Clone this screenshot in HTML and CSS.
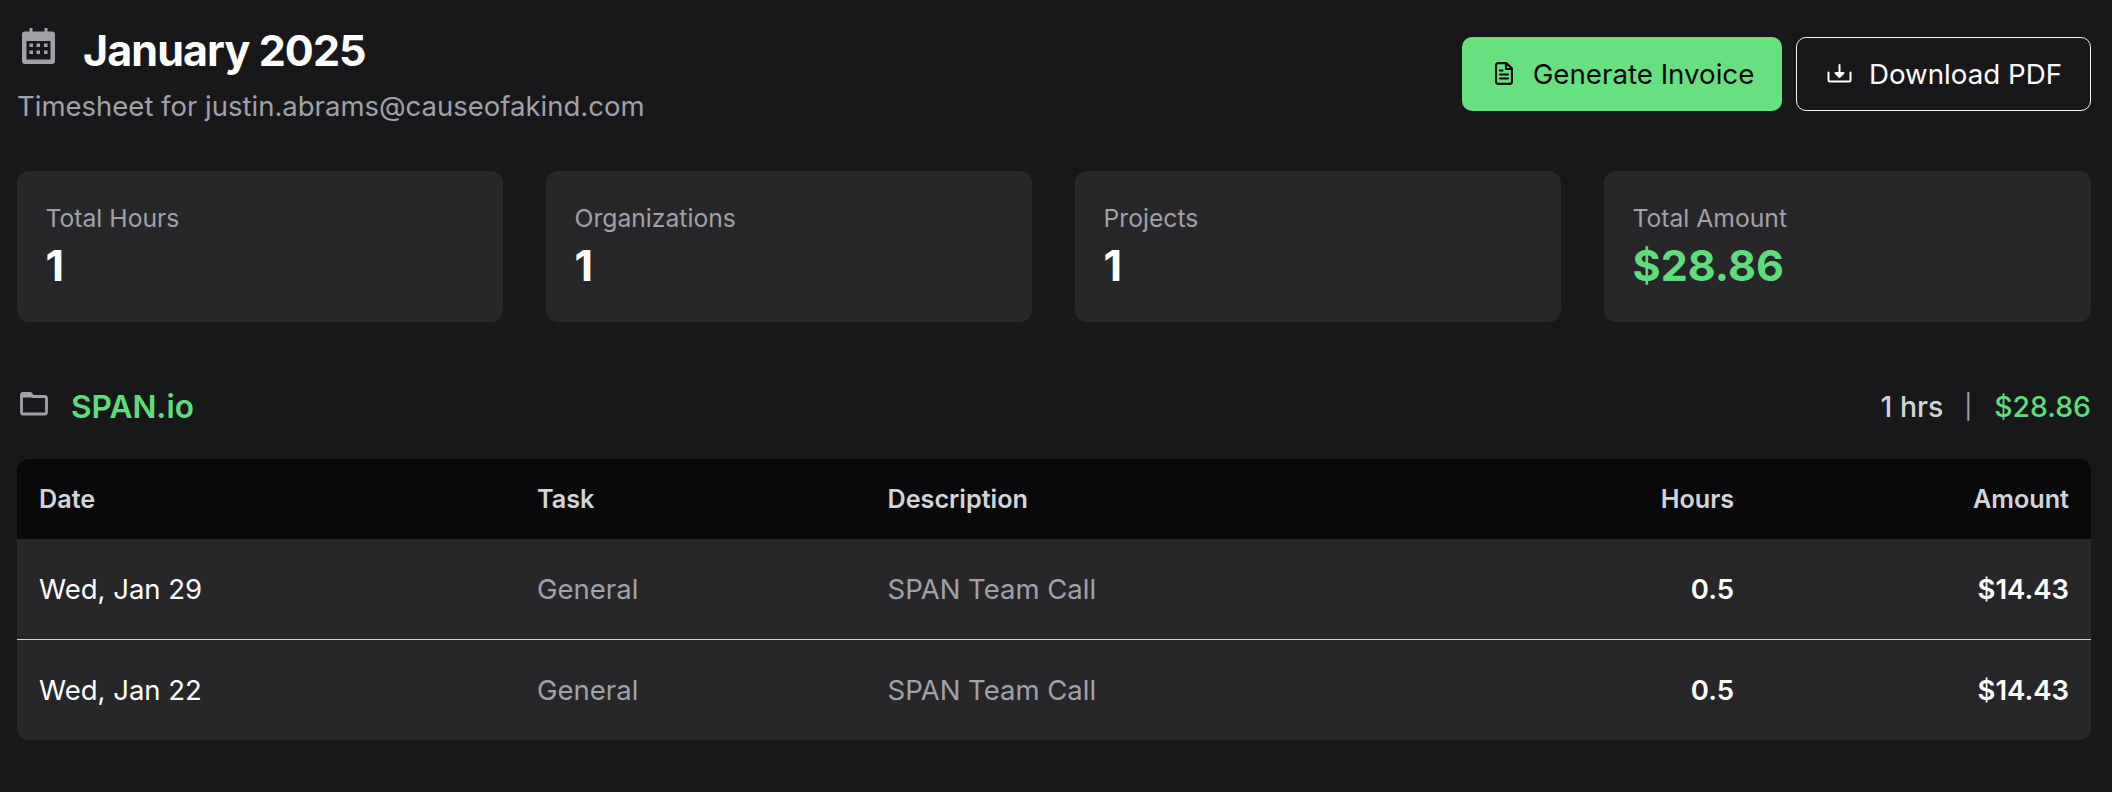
FILE: index.html
```html
<!DOCTYPE html>
<html lang="en">
<head>
<meta charset="utf-8">
<title>January 2025 Timesheet</title>
<link rel="stylesheet" href="styles.css">
</head>
<body>
<main class="page">
  <header class="top">
    <div class="heading">
      <div class="title-row">
        <svg class="cal" viewBox="0 0 33 36" fill="currentColor"><rect x="7.5" y="0" width="3" height="6"/><rect x="22.5" y="0" width="3" height="6"/><path fill-rule="evenodd" d="M3 3.5h27a3 3 0 0 1 3 3V33a3 3 0 0 1-3 3H3a3 3 0 0 1-3-3V6.500a3 3 0 0 1 3-3zM4.500 13v18.500h24V13z"/><rect x="7.500" y="15.500" width="3.500" height="3.500"/><rect x="14.500" y="15.500" width="3.500" height="3.500"/><rect x="22" y="15.500" width="3.500" height="3.500"/><rect x="7.500" y="22.500" width="3.500" height="3.500"/><rect x="14.500" y="22.500" width="3.500" height="3.500"/><rect x="22" y="22.500" width="3.500" height="3.500"/></svg>
        <h1>January 2025</h1>
      </div>
      <p class="sub">Timesheet for justin.abrams@causeofakind.com</p>
    </div>
    <div class="actions">
      <button class="btn primary">
        <svg class="ico-doc" viewBox="0 0 18 23" fill="none" stroke="currentColor" stroke-width="2.200" stroke-linecap="round" stroke-linejoin="round"><path d="M11.500 1.200H3a2 2 0 0 0-2 2v16.600a2 2 0 0 0 2 2h12a2 2 0 0 0 2-2V6.500z"/><path d="M11 2v5h5.500M5 12.500h8M5 16.500h8M5 8.500h2.500"/></svg>
        Generate Invoice
      </button>
      <button class="btn outline">
        <svg class="ico-dl" viewBox="0 0 25 19" fill="none" stroke="currentColor" stroke-width="2" stroke-linecap="round" stroke-linejoin="round"><path d="M1.500 8.500v7.500a1.500 1.500 0 0 0 1.500 1.500h19a1.500 1.500 0 0 0 1.500-1.500V8.500"/><path d="M12.500 1v10.500"/><path d="M8.500 9l4 4 4-4z" fill="currentColor"/></svg>
        Download PDF
      </button>
    </div>
  </header>

  <section class="cards">
    <div class="card"><div class="label">Total Hours</div><div class="value">1</div></div>
    <div class="card"><div class="label">Organizations</div><div class="value">1</div></div>
    <div class="card"><div class="label">Projects</div><div class="value">1</div></div>
    <div class="card"><div class="label">Total Amount</div><div class="value green">$28.86</div></div>
  </section>

  <section class="org">
    <div class="org-name">
      <svg class="folder" viewBox="0 0 28 24" fill="none" stroke="currentColor" stroke-width="2.800" stroke-linecap="round" stroke-linejoin="round"><path d="M3 1.500h7.500l2.500 3h12a1.600 1.600 0 0 1 1.500 1.500v14.500a1.600 1.600 0 0 1-1.500 1.500H3a1.600 1.600 0 0 1-1.500-1.500V3A1.600 1.600 0 0 1 3 1.500z"/><path d="M2 3h9l1.500 2H2z" fill="currentColor" stroke-width="1"/></svg>
      <h2>SPAN.io</h2>
    </div>
    <div class="org-total"><span class="hrs">1 hrs</span><span class="sep">|</span><span class="amt">$28.86</span></div>
  </section>

  <section class="table">
    <div class="row head"><div>Date</div><div>Task</div><div>Description</div><div class="num">Hours</div><div class="num">Amount</div></div>
    <div class="row body"><div class="date">Wed, Jan 29</div><div class="muted">General</div><div class="muted">SPAN Team Call</div><div class="num strong">0.5</div><div class="num strong">$14.43</div></div>
    <div class="row body sep-top"><div class="date">Wed, Jan 22</div><div class="muted">General</div><div class="muted">SPAN Team Call</div><div class="num strong">0.5</div><div class="num strong">$14.43</div></div>
  </section>
</main>
</body>
</html>
```
FILE: styles.css
```css
* { box-sizing: border-box; }
html, body { margin: 0; height: 100%; }
body { background: #18181b; color: #fff; font-family: Inter, "Liberation Sans", sans-serif; overflow: hidden; }
.page { padding: 0 21px 0 17px; }
.top { display: flex; justify-content: space-between; align-items: flex-start; height: 171px; padding-top: 24px; }
.title-row { display: flex; align-items: center; gap: 28px; height: 52px; padding-left: 5px; }
.cal { width: 33px; height: 36px; color: #a1a1aa; margin-top: -8px; }
h1 { margin: 0; font-size: 43px; font-weight: 700; line-height: 52px; letter-spacing: -0.9px; }
.sub { margin: 11px 0 0; font-size: 27.5px; line-height: 38px; color: #a1a1aa; }
.actions { display: flex; gap: 14px; padding-top: 13px; }
.btn { display: flex; align-items: center; justify-content: center; gap: 17px; height: 74px; border-radius: 10px; font: 400 27.7px Inter, sans-serif; }
.ico-doc { width: 18px; height: 23px; margin-top: -1px; }
.ico-dl { width: 25px; height: 19px; margin-top: -2px; }
.primary { width: 320px; padding: 0 0 0 5px; gap: 20px; background: #67e07f; color: #09090b; border: 0; }
.outline { width: 295px; padding: 0 0 0 2px; background: #18181b; color: #fff; border: 1px solid #f4f4f5; }
.cards { display: grid; grid-template-columns: 486px 486px 486px 1fr; gap: 43px; }
.card { height: 151px; background: #27272a; border-radius: 12px; padding: 31px 28.5px; }
.label { font-size: 24.7px; line-height: 32px; color: #a1a1aa; }
.value { font-size: 43px; font-weight: 700; line-height: 48px; margin-top: 7px; }
.green { color: #5fdd7c; }
.org { display: flex; justify-content: space-between; align-items: center; height: 137px; padding-top: 31px; }
.org-name { display: flex; align-items: center; gap: 23px; padding-left: 3px; }
.folder { width: 28px; height: 24px; color: #a1a1aa; margin-top: -4px; }
h2 { margin: 0; font-size: 31.6px; font-weight: 600; color: #5fdd7c; }
.org-total { display: flex; align-items: center; gap: 22px; font-size: 28.4px; font-weight: 500; }
.hrs { color: #d4d4d8; margin-right: -1px; }
.sep { color: #a1a1aa; font-weight: 400; font-size: 24px; }
.amt { color: #5fdd7c; }
.table { border-radius: 12px; overflow: hidden; background: #27272a; }
.row { display: grid; grid-template-columns: 498px 350.5px 658.5px 188px 335px; align-items: center; padding: 0 22px; font-size: 27.5px; }
.head { height: 80px; background: #09090b; color: #d4d4d8; font-size: 25.2px; font-weight: 600; }
.body { height: 100px; }
.sep-top { height: 101px; border-top: 1px solid #d4d4d8; }
.date { color: #fff; }
.muted { color: #a1a1aa; }
.num { text-align: right; }
.strong { font-weight: 600; color: #fff; }
```
